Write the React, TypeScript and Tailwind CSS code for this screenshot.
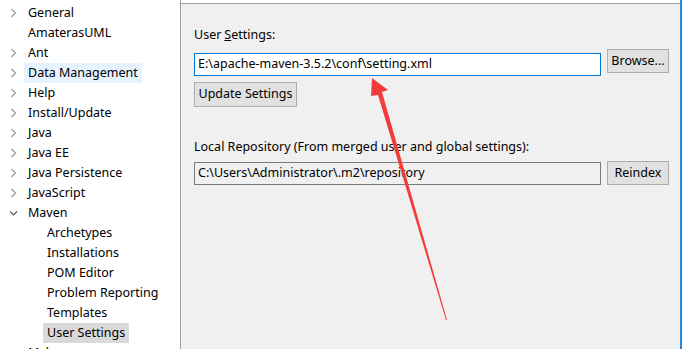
import React from "react";

const font = { fontFamily: '"Noto Sans", "Open Sans", sans-serif' };

function ChevRight() {
  return (
    <svg width="24" height="20" viewBox="0 0 24 20" className="shrink-0">
      <path d="M11.5 6 L15.5 10 L11.5 14" fill="none" stroke="#9a9a9a" strokeWidth="1.2" />
    </svg>
  );
}
function ChevDown() {
  return (
    <svg width="24" height="20" viewBox="0 0 24 20" className="shrink-0">
      <path d="M10 8.5 L13.5 12 L17 8.5" fill="none" stroke="#555" strokeWidth="1.2" />
    </svg>
  );
}

type Item = { label: string; chev?: "r" | "d" | null; child?: boolean; sel?: "blue" | "gray" };

const items: Item[] = [
  { label: "General", chev: "r" },
  { label: "AmaterasUML", chev: null },
  { label: "Ant", chev: "r" },
  { label: "Data Management", chev: "r", sel: "blue" },
  { label: "Help", chev: "r" },
  { label: "Install/Update", chev: "r" },
  { label: "Java", chev: "r" },
  { label: "Java EE", chev: "r" },
  { label: "Java Persistence", chev: "r" },
  { label: "JavaScript", chev: "r" },
  { label: "Maven", chev: "d" },
  { label: "Archetypes", child: true },
  { label: "Installations", child: true },
  { label: "POM Editor", child: true },
  { label: "Problem Reporting", child: true },
  { label: "Templates", child: true },
  { label: "User Settings", child: true, sel: "gray" },
  { label: "Mylyn", chev: "r" },
];

export default function App() {
  return (
    <div
      className="relative w-[682px] h-[349px] overflow-hidden flex bg-white text-[12.5px] text-black"
      style={font}
    >
      {/* Left tree */}
      <div className="w-[181px] shrink-0 border-r border-[#a0a0a0] bg-white pt-[3px]">
        {items.map((it) => (
          <div key={it.label} className="h-5 flex items-center">
            {it.child ? (
              <div className="w-[43px] shrink-0" />
            ) : it.chev === "r" ? (
              <ChevRight />
            ) : it.chev === "d" ? (
              <ChevDown />
            ) : (
              <div className="w-[24px] shrink-0" />
            )}
            <div
              className={
                "h-5 flex items-center px-[4px] leading-none whitespace-nowrap " +
                (it.sel === "blue" ? "bg-[#e5f3ff]" : it.sel === "gray" ? "bg-[#d9d9d9]" : "")
              }
            >
              {it.label}
            </div>
          </div>
        ))}
      </div>

      {/* Right panel */}
      <div className="flex-1 flex flex-col border-r-2 border-[#2a88d8]">
        <div className="h-[3px] bg-white" />
        <div className="flex-1 bg-[#f0f0f0] border-t border-[#a0a0a0] pl-[13px] pr-[10px]">
          <div className="mt-[22px] h-[18px] flex items-center leading-none">
            User <span className="underline ml-[3px]">S</span>ettings:
          </div>
          <div className="mt-[5px] flex items-start gap-[6px]">
            <div className="mt-[4px] w-[407px] h-[23px] bg-white border border-[#0078d7] flex items-center pl-[3px] leading-none whitespace-nowrap">
              E:\apache-maven-3.5.2\conf\setting.xml
            </div>
            <div className="w-[62px] h-[24px] bg-[#e1e1e1] border border-[#adadad] flex items-center justify-center leading-none">
              Browse...
            </div>
          </div>
          <div className="mt-[6px] w-[103px] h-[25px] bg-[#e1e1e1] border border-[#adadad] flex items-center justify-center leading-none">
            Update Settings
          </div>
          <div className="mt-[31px] h-[18px] flex items-center leading-none whitespace-nowrap">
            Local Repository (From merged user and global settings):
          </div>
          <div className="mt-[5px] flex items-start gap-[6px]">
            <div className="mt-[1px] w-[407px] h-[23px] bg-[#f0f0f0] border border-[#7a7a7a] flex items-center pl-[3px] leading-none whitespace-nowrap">
              C:\Users\Administrator\.m2\repository
            </div>
            <div className="w-[62px] h-[24px] bg-[#e1e1e1] border border-[#adadad] flex items-center justify-center leading-none">
              Reindex
            </div>
          </div>
        </div>
      </div>

      {/* Red arrow annotation */}
      <svg className="absolute left-0 top-0 pointer-events-none" width="682" height="349">
        <polygon
          points="372,78 388,90 382,92 447,320 446,320 378,95 371,96"
          fill="#f23c3c"
        />
      </svg>
    </div>
  );
}
